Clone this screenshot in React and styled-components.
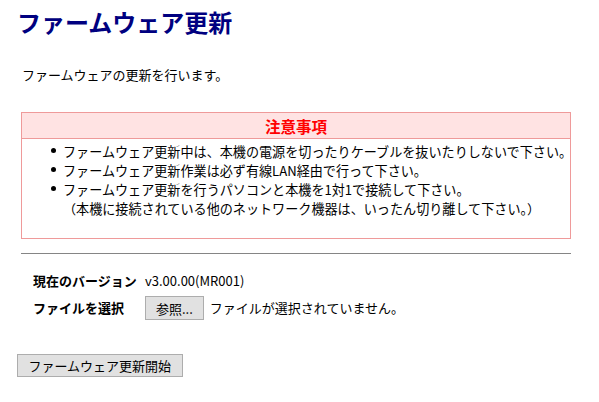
import React from "react";
import styled, { createGlobalStyle } from "styled-components";

const GlobalStyle = createGlobalStyle`
  html, body { margin: 0; padding: 0; background: #ffffff; }
  body {
    font-family: "Noto Sans CJK JP", "Noto Sans", sans-serif;
    font-size: 13px;
    color: #000000;
  }
`;

const Page = styled.div`
  width: 550px;
  padding-left: 21px;
  display: flex;
  flex-direction: column;
  align-items: flex-start;
`;

const Title = styled.h1`
  margin: 8px 0 0 -4px;
  font-size: 24px;
  line-height: 28px;
  font-weight: 700;
  color: #000080;
`;

const Desc = styled.p`
  margin: 29px 0 0 1px;
  font-size: 13px;
  line-height: 19px;
`;

const Notice = styled.section`
  margin-top: 28px;
  width: 100%;
  box-sizing: border-box;
  border: 1px solid #ef9a9a;
`;

const NoticeHead = styled.div`
  height: 25px;
  background: #ffe3e3;
  border-bottom: 1px solid #ef9a9a;
  display: flex;
  align-items: center;
  justify-content: center;
  color: #ff0000;
  font-weight: 700;
  font-size: 15.5px;
`;

const NoticeList = styled.ul`
  list-style: none;
  margin: 0;
  padding: 3px 0 20px 29px;
`;

const Item = styled.li`
  display: flex;
  align-items: flex-start;
  gap: 7px;
  font-size: 13.1px;
  line-height: 19px;
  white-space: nowrap;
`;

const Dot = styled.span`
  flex: none;
  width: 5px;
  height: 5px;
  border-radius: 50%;
  background: #000;
  margin-top: 6px;
`;

const Rule = styled.div`
  margin-top: 14px;
  width: 100%;
  height: 1px;
  background: #858585;
`;

const Form = styled.div`
  margin-top: 15px;
  padding-left: 12px;
  display: grid;
  grid-template-columns: 112px auto;
  row-gap: 3px;
  align-items: center;
`;

const Label = styled.div`
  font-weight: 700;
  font-size: 13px;
  line-height: 24px;
  white-space: nowrap;
`;

const Value = styled.div`
  display: flex;
  align-items: center;
  gap: 6px;
  font-size: 13px;
  line-height: 24px;
  white-space: nowrap;
`;

const Button = styled.button`
  box-sizing: border-box;
  height: ${(p) => p.$h}px;
  padding: 0 ${(p) => p.$pad}px;
  margin: 0;
  background: #e1e1e1;
  border: 1px solid #adadad;
  border-radius: 0;
  font-family: inherit;
  font-size: 13px;
  color: #000;
  line-height: 1;
  white-space: nowrap;
`;

const StartWrap = styled.div`
  margin: 34px 0 0 -4px;
`;

export default function App() {
  return (
    <>
      <GlobalStyle />
      <Page>
        <Title>ファームウェア更新</Title>
        <Desc>ファームウェアの更新を行います。</Desc>
        <Notice>
          <NoticeHead>注意事項</NoticeHead>
          <NoticeList>
            <Item>
              <Dot />
              <span>ファームウェア更新中は、本機の電源を切ったりケーブルを抜いたりしないで下さい。</span>
            </Item>
            <Item>
              <Dot />
              <span>ファームウェア更新作業は必ず有線LAN経由で行って下さい。</span>
            </Item>
            <Item>
              <Dot />
              <span>
                ファームウェア更新を行うパソコンと本機を1対1で接続して下さい。
                <br />
                （本機に接続されている他のネットワーク機器は、いったん切り離して下さい。）
              </span>
            </Item>
          </NoticeList>
        </Notice>
        <Rule />
        <Form>
          <Label>現在のバージョン</Label>
          <Value>v3.00.00(MR001)</Value>
          <Label>ファイルを選択</Label>
          <Value>
            <Button $h={24} $pad={10}>参照...</Button>
            <span>ファイルが選択されていません。</span>
          </Value>
        </Form>
        <StartWrap>
          <Button $h={23} $pad={10.5}>ファームウェア更新開始</Button>
        </StartWrap>
      </Page>
    </>
  );
}
